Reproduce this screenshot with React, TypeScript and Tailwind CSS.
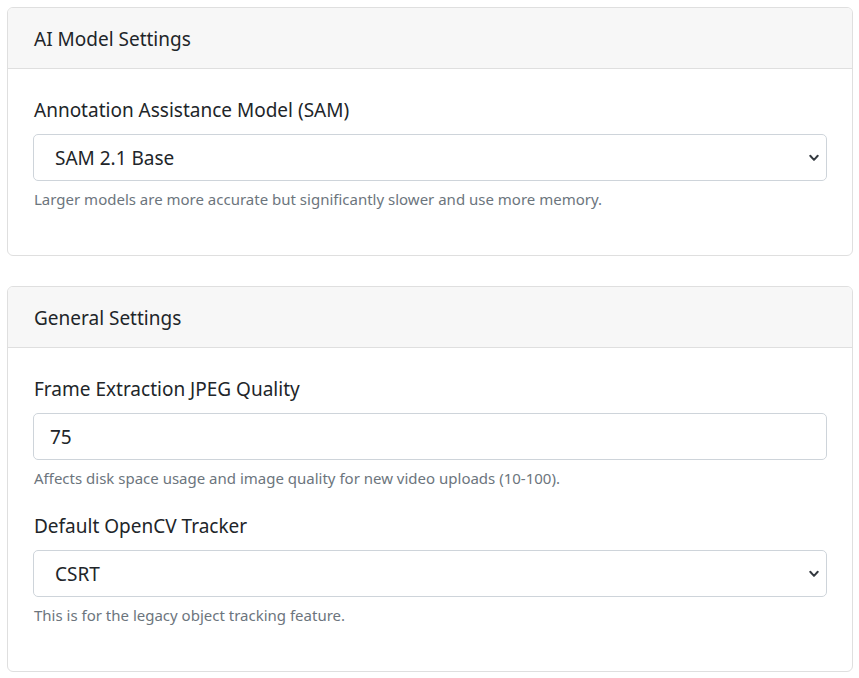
const font = { fontFamily: '"Noto Sans", "Open Sans", sans-serif' };

function Chevron() {
  return (
    <svg width="14" height="12" viewBox="1 0 14 16" className="shrink-0">
      <path
        d="m3 5 5 5.5 5-5.5"
        fill="none"
        stroke="#343a40"
        strokeWidth={2.6}
        strokeLinecap="round"
        strokeLinejoin="round"
      />
    </svg>
  );
}

function Field({
  label,
  value,
  help,
  select,
}: {
  label: string;
  value: string;
  help: string;
  select?: boolean;
}) {
  return (
    <div className="mb-[22px]">
      <div className="text-[19px] leading-[30px] text-[#212529] mb-[9px]">{label}</div>
      <div
        className={
          "-mx-px flex h-[47px] items-center justify-between rounded-[5px] border border-[#ced4da] bg-white pr-[5px] pt-px text-[19px] text-[#212529] " +
          (select ? "pl-[21px]" : "pl-[16px]")
        }
      >
        <span>{value}</span>
        {select && <Chevron />}
      </div>
      <div className="mt-[7px] text-[15px] leading-[22px] text-[#6c757d]">{help}</div>
    </div>
  );
}

function Card({ title, children }: { title: string; children: React.ReactNode }) {
  return (
    <div className="rounded-[6px] border border-[#dfdfdf] bg-white overflow-hidden">
      <div className="flex h-[61px] items-center border-b border-[#dfdfdf] bg-[#f7f7f7] px-[26px] pt-[2px] text-[19px] text-[#212529]">
        {title}
      </div>
      <div className="px-[26px] pt-[26px] pb-[23px]">{children}</div>
    </div>
  );
}

export default function App() {
  return (
    <div className="min-h-[678px] bg-white pl-[7px] pr-[6px] pt-[7px]" style={font}>
      <div className="flex flex-col gap-[30px]">
        <Card title="AI Model Settings">
          <Field
            label="Annotation Assistance Model (SAM)"
            value="SAM 2.1 Base"
            help="Larger models are more accurate but significantly slower and use more memory."
            select
          />
        </Card>
        <Card title="General Settings">
          <Field
            label="Frame Extraction JPEG Quality"
            value="75"
            help="Affects disk space usage and image quality for new video uploads (10-100)."
          />
          <Field
            label="Default OpenCV Tracker"
            value="CSRT"
            help="This is for the legacy object tracking feature."
            select
          />
        </Card>
      </div>
    </div>
  );
}
